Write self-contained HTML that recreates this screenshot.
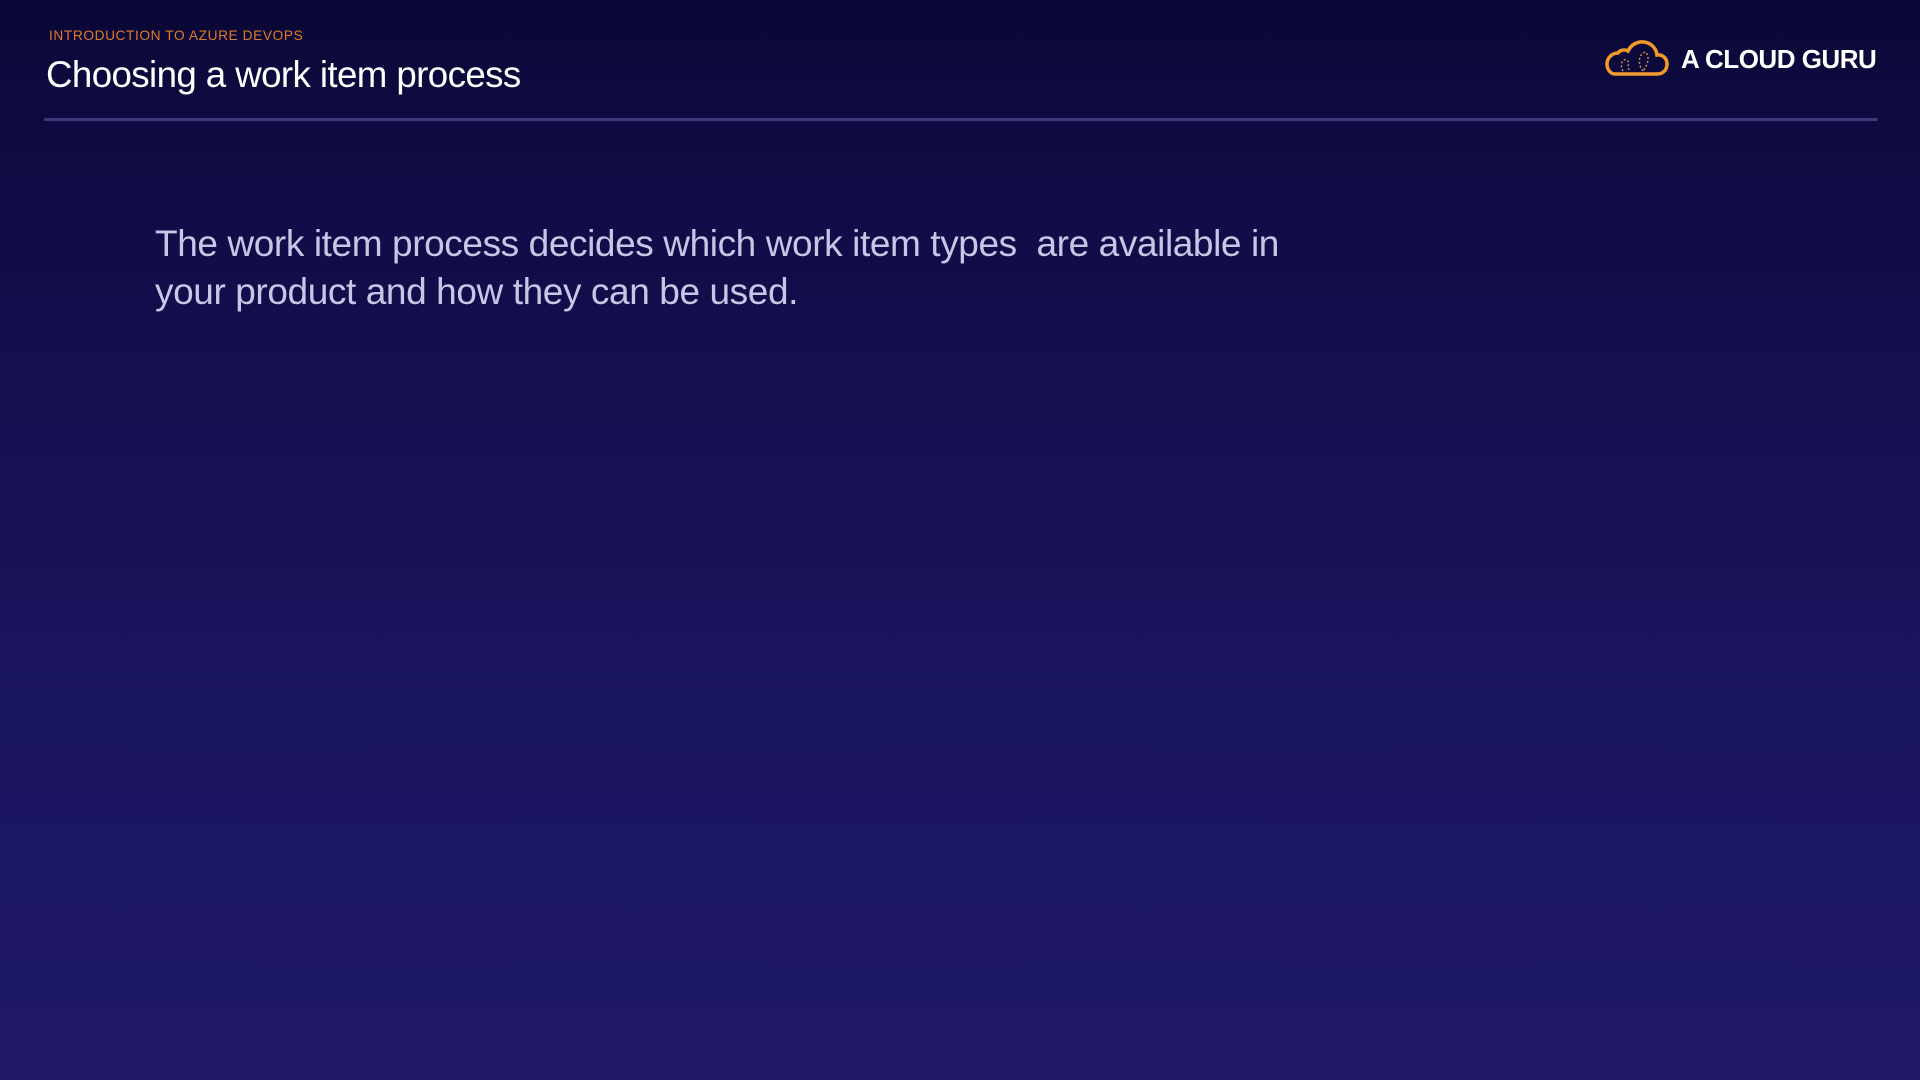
<!DOCTYPE html>
<html><head><style>
html,body{margin:0;padding:0}
body{width:1920px;height:1080px;overflow:hidden;position:relative;
background:linear-gradient(180deg,#0a0736 0%,#0f0b42 12%,#150f4f 35%,#1b1660 65%,#1e1866 100%);
font-family:"Liberation Sans",sans-serif}
.sub{position:absolute;left:49px;top:28px;color:#e07b2a;font-size:13.7px;letter-spacing:0.6px}
.title{position:absolute;left:46px;top:54px;color:#fff;font-size:36.7px;letter-spacing:-0.6px}
.line{position:absolute;left:44px;top:118px;width:1834px;height:3px;background:#3d3878;border-radius:2px}
.logo{position:absolute;left:1681px;top:44px;color:#fff;font-size:26px;font-weight:bold;letter-spacing:-0.5px}
.body{position:absolute;left:155px;top:220px;width:1160px;color:#c8c6e6;font-size:37px;line-height:48px;letter-spacing:-0.4px}
</style></head><body>
<div class="sub">INTRODUCTION TO AZURE DEVOPS</div>
<div class="title">Choosing a work item process</div>
<div class="line"></div>
<svg style="position:absolute;left:1603px;top:38px" width="66" height="40" viewBox="0 0 66 40">
<path d="M12 36 H54 C61 36 64 31 64 26 C64 20 59 16 54 17 C53 8 45 3 37 4 C31 5 27 9 25 13 C22 11 17 12 15 15 C9 15 4 20 4 26 C4 32 8 36 12 36 Z" fill="none" stroke="#f29a2a" stroke-width="3.5"/>
<path d="M20 33 C16 26 20 20 24 22 C28 25 22 30 28 33 M40 33 C34 26 36 16 42 14 C48 18 44 28 40 33" fill="none" stroke="#c98a3a" stroke-width="1.5" stroke-dasharray="2 2"/>
</svg>
<div class="logo">A CLOUD GURU</div>
<div class="body">The work item process decides which work item types&nbsp; are available in your product and how they can be used.</div>
</body></html>
